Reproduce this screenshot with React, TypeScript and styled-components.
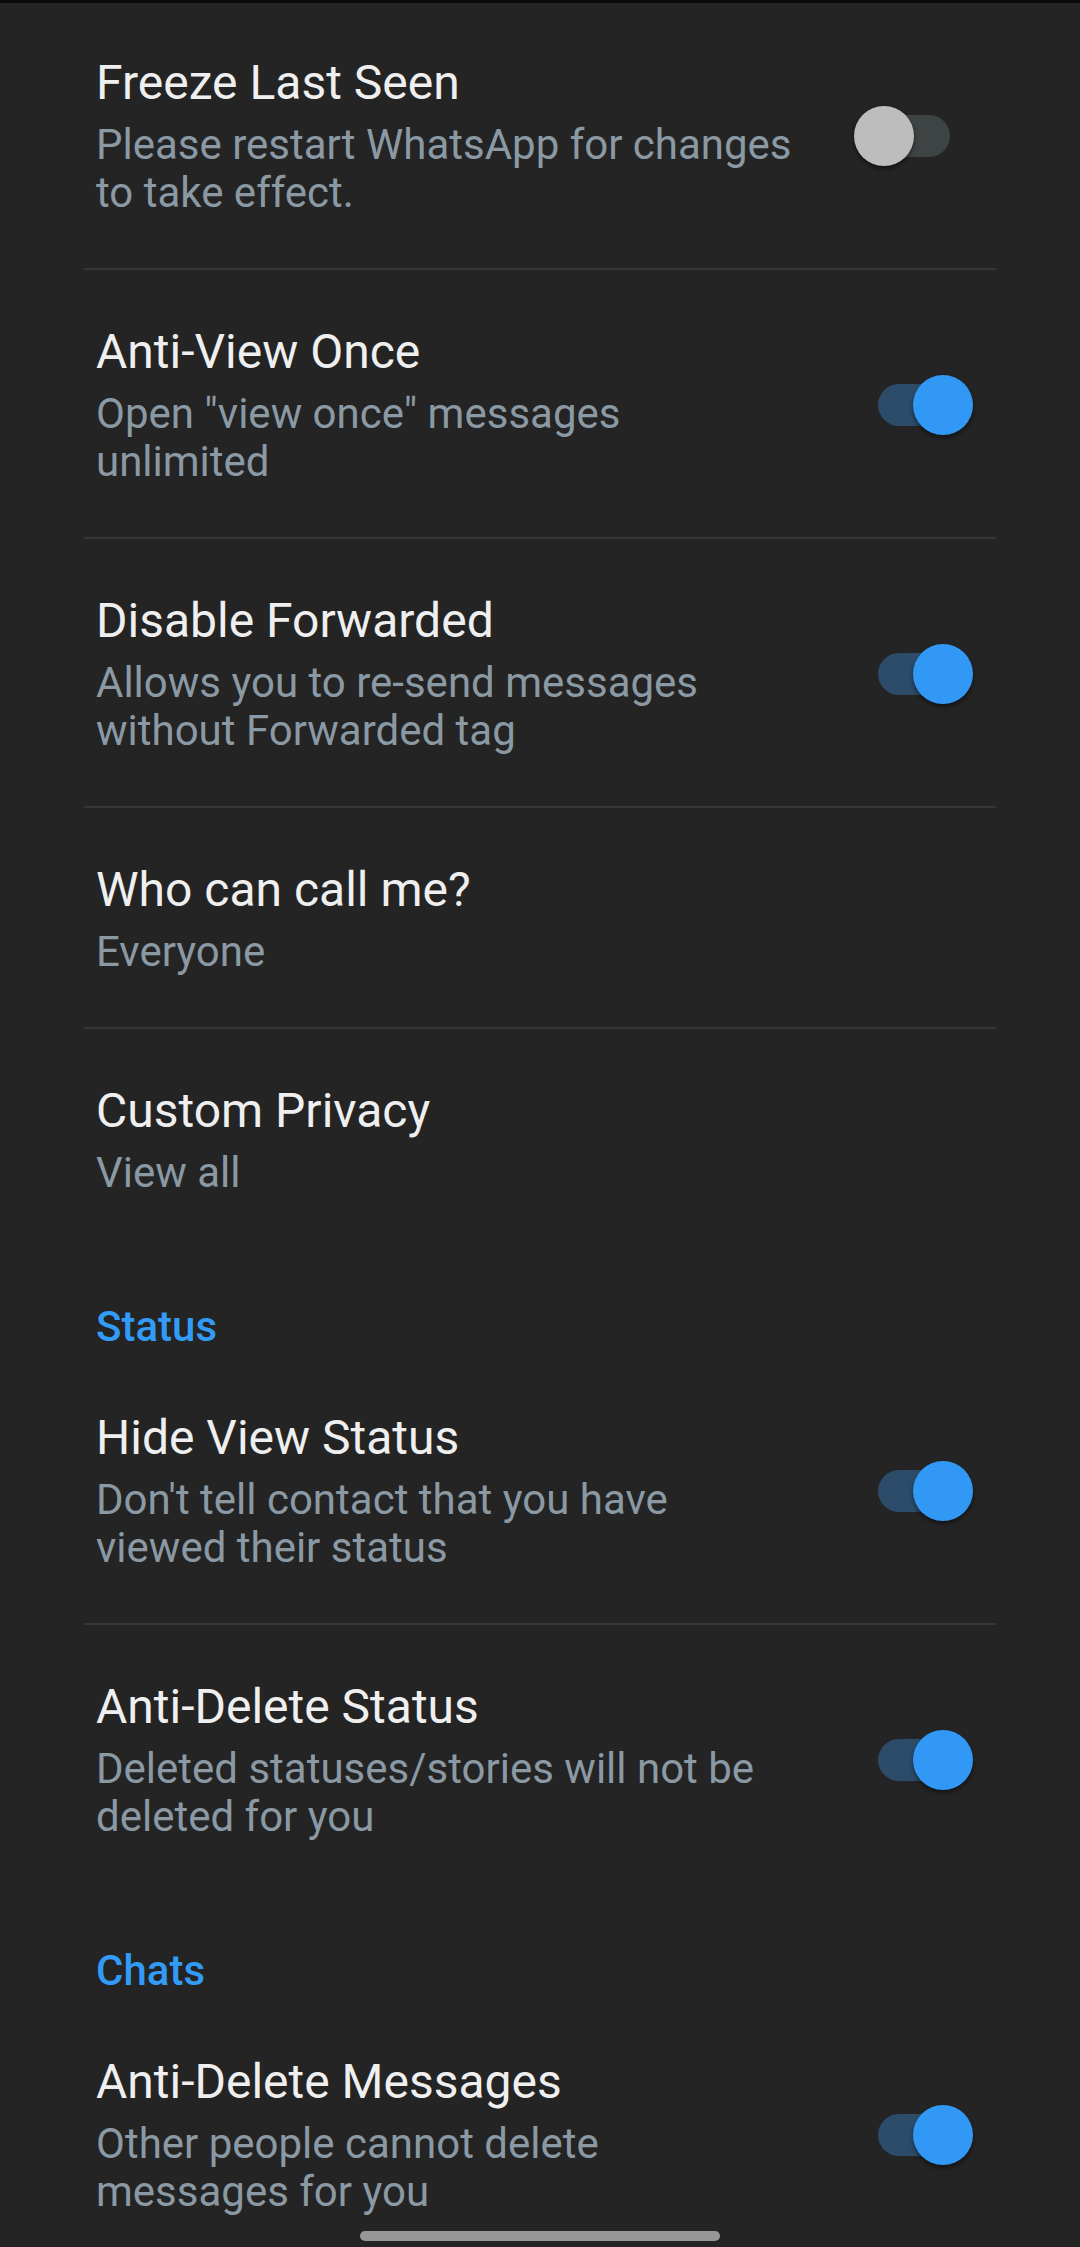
import React from "react";
import styled, { createGlobalStyle } from "styled-components";

const Global = createGlobalStyle`
  html, body { margin: 0; padding: 0; background: #242424; }
  body { font-family: Roboto, "Noto Sans", "Liberation Sans", sans-serif; }
`;

const Screen = styled.div`
  position: relative;
  width: 1080px;
  height: 2247px;
  overflow: hidden;
  background: #242424;
  display: flex;
  flex-direction: column;
`;

const StatusStrip = styled.div`
  height: 3px;
  background: #0a0a0a;
  flex-shrink: 0;
`;

const List = styled.div`
  display: flex;
  flex-direction: column;
  padding: 0 84px;
`;

const Row = styled.div<{ $divider?: boolean; $first?: boolean; $inset?: number }>`
  display: flex;
  align-items: center;
  justify-content: space-between;
  padding: ${(p) => (p.$first ? 52 : 54)}px ${(p) => p.$inset ?? 22}px 51px 12px;
  border-bottom: ${(p) => (p.$divider ? "2px solid #363636" : "2px solid transparent")};
`;

const TextBlock = styled.div`
  display: flex;
  flex-direction: column;
  gap: 10px;
`;

const Title = styled.div`
  font-size: 48px;
  line-height: 56px;
  color: #efefef;
  white-space: nowrap;
`;

const Subtitle = styled.div`
  font-size: 42px;
  line-height: 48px;
  color: #8a99a3;
  white-space: nowrap;
`;

const SectionHeader = styled.div`
  padding: 53px 12px 5px;
  font-size: 42px;
  line-height: 48px;
  font-weight: 500;
  color: #329bf6;
`;

const SwitchBox = styled.div`
  position: relative;
  width: 108px;
  height: 60px;
  flex-shrink: 0;
`;

const Track = styled.div<{ $on: boolean }>`
  position: absolute;
  left: 12px;
  top: 9px;
  width: 84px;
  height: 42px;
  border-radius: 21px;
  background: ${(p) => (p.$on ? "#2c4c69" : "#3e4343")};
`;

const Thumb = styled.div<{ $on: boolean }>`
  position: absolute;
  top: 0;
  left: ${(p) => (p.$on ? 47 : 0)}px;
  width: 60px;
  height: 60px;
  border-radius: 50%;
  background: ${(p) => (p.$on ? "#3199f5" : "#bdbdbd")};
  box-shadow: 0 3px 4px rgba(0, 0, 0, 0.45);
`;

const NavHandle = styled.div`
  position: absolute;
  left: 360px;
  bottom: 6px;
  width: 360px;
  height: 10px;
  border-radius: 5px;
  background: #979797;
`;

type Item = {
  title: string;
  sub: string[];
  toggle?: boolean;
  divider?: boolean;
  first?: boolean;
  inset?: number;
};

const Switch = ({ on }: { on: boolean }) => (
  <SwitchBox>
    <Track $on={on} />
    <Thumb $on={on} />
  </SwitchBox>
);

const Pref = ({ item }: { item: Item }) => (
  <Row $divider={item.divider} $first={item.first} $inset={item.inset}>
    <TextBlock>
      <Title>{item.title}</Title>
      <Subtitle>
        {item.sub.map((l, i) => (
          <React.Fragment key={i}>
            {i > 0 && <br />}
            {l}
          </React.Fragment>
        ))}
      </Subtitle>
    </TextBlock>
    {item.toggle !== undefined && <Switch on={item.toggle} />}
  </Row>
);

const privacy: Item[] = [
  {
    title: "Freeze Last Seen",
    sub: ["Please restart WhatsApp for changes", "to take effect."],
    toggle: false,
    divider: true,
    first: true,
    inset: 34,
  },
  {
    title: "Anti-View Once",
    sub: ['Open "view once" messages', "unlimited"],
    toggle: true,
    divider: true,
  },
  {
    title: "Disable Forwarded",
    sub: ["Allows you to re-send messages", "without Forwarded tag"],
    toggle: true,
    divider: true,
  },
  { title: "Who can call me?", sub: ["Everyone"], divider: true },
  { title: "Custom Privacy", sub: ["View all"] },
];

const status: Item[] = [
  {
    title: "Hide View Status",
    sub: ["Don't tell contact that you have", "viewed their status"],
    toggle: true,
    divider: true,
  },
  {
    title: "Anti-Delete Status",
    sub: ["Deleted statuses/stories will not be", "deleted for you"],
    toggle: true,
  },
];

const chats: Item[] = [
  {
    title: "Anti-Delete Messages",
    sub: ["Other people cannot delete", "messages for you"],
    toggle: true,
  },
];

export default function App() {
  return (
    <Screen>
      <Global />
      <StatusStrip />
      <List>
        {privacy.map((it) => (
          <Pref key={it.title} item={it} />
        ))}
        <SectionHeader>Status</SectionHeader>
        {status.map((it) => (
          <Pref key={it.title} item={it} />
        ))}
        <SectionHeader>Chats</SectionHeader>
        {chats.map((it) => (
          <Pref key={it.title} item={it} />
        ))}
      </List>
      <NavHandle />
    </Screen>
  );
}
